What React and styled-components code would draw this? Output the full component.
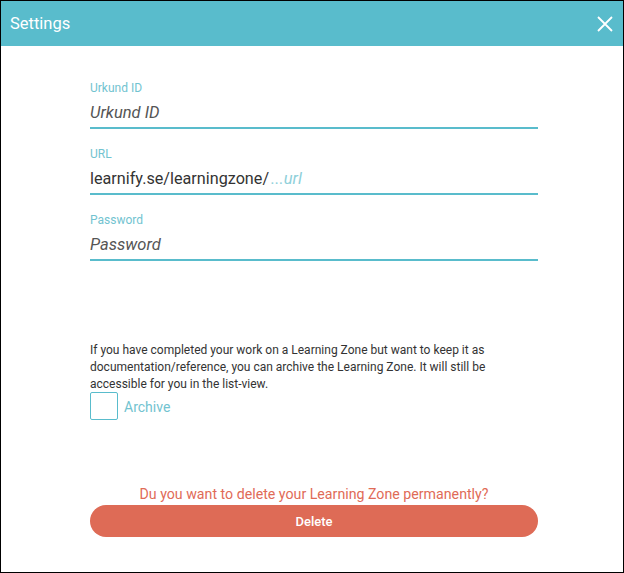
import React from 'react'
import styled, { createGlobalStyle } from 'styled-components'

const GlobalStyle = createGlobalStyle`
  html, body {
    margin: 0;
    padding: 0;
    background: #fff;
  }
  body {
    font-family: Roboto, 'Liberation Sans', sans-serif;
  }
`

const Dialog = styled.div`
  box-sizing: border-box;
  width: 624px;
  height: 573px;
  border: 1px solid #000;
  background: #fff;
  display: flex;
  flex-direction: column;
`

const Header = styled.div`
  height: 45px;
  background: #59bccc;
  display: flex;
  align-items: center;
  justify-content: space-between;
  padding: 0 10px 0 9px;
`

const Title = styled.h2`
  margin: 0;
  color: #fff;
  font-size: 16.5px;
  font-weight: 400;
`

const CloseButton = styled.button`
  background: none;
  border: none;
  padding: 0;
  width: 16px;
  height: 16px;
  display: flex;
  cursor: pointer;
  margin-top: 1px;
`

const Body = styled.div`
  padding: 35px 0 0 89px;
  width: 448px;
  display: flex;
  flex-direction: column;
`

const Field = styled.div`
  display: flex;
  flex-direction: column;
  margin-bottom: 18px;
`

const Label = styled.label`
  font-size: 12px;
  line-height: 14px;
  color: #72c3d0;
`

const InputRow = styled.div`
  display: flex;
  align-items: center;
  height: 34px;
  padding-top: 4px;
  box-sizing: border-box;
  border-bottom: 2px solid #59bccc;
`

const Prefix = styled.span`
  font-size: 16.2px;
  line-height: 20px;
  color: #333;
  margin-right: 2px;
`

const Input = styled.input`
  flex: 1;
  border: none;
  outline: none;
  padding: 0;
  background: none;
  font-family: Roboto, 'Liberation Sans', sans-serif;
  font-size: 16.5px;
  line-height: 20px;
  color: #333;

  &::placeholder {
    font-style: italic;
    color: ${(p) => (p.$light ? '#8fd0da' : '#555')};
  }
`

const Info = styled.p`
  margin: 63px 0 0;
  font-size: 12px;
  line-height: 16.8px;
  color: #333;
`

const CheckRow = styled.label`
  display: flex;
  align-items: center;
  gap: 6px;
`

const Box = styled.span`
  box-sizing: border-box;
  width: 28px;
  height: 28px;
  border: 1px solid #59bccc;
  border-radius: 2px;
  background: #fff;
`

const CheckText = styled.span`
  font-size: 14px;
  line-height: 16px;
  padding-top: 1px;
  color: #72c3d0;
`

const Question = styled.div`
  margin-top: 66px;
  text-align: center;
  font-size: 14.2px;
  line-height: 17px;
  color: #df6b57;
`

const DeleteButton = styled.button`
  margin-top: 2px;
  height: 32px;
  border: none;
  border-radius: 16px;
  background: #de6b56;
  color: #fff;
  font-family: Roboto, 'Liberation Sans', sans-serif;
  font-size: 13px;
  font-weight: 500;
  cursor: pointer;
`

const CloseIcon = () => (
  <svg width="16" height="16" viewBox="0 0 16 16">
    <path d="M1 1 L15 15 M15 1 L1 15" stroke="#fff" strokeWidth="1.8" fill="none" />
  </svg>
)

export default function App() {
  return (
    <>
      <GlobalStyle />
      <Dialog>
        <Header>
          <Title>Settings</Title>
          <CloseButton aria-label="close">
            <CloseIcon />
          </CloseButton>
        </Header>
        <Body>
          <Field>
            <Label>Urkund ID</Label>
            <InputRow>
              <Input placeholder="Urkund ID" />
            </InputRow>
          </Field>
          <Field>
            <Label>URL</Label>
            <InputRow>
              <Prefix>learnify.se/learningzone/</Prefix>
              <Input placeholder="...url" $light />
            </InputRow>
          </Field>
          <Field>
            <Label>Password</Label>
            <InputRow>
              <Input type="password" placeholder="Password" />
            </InputRow>
          </Field>
          <Info>
            If you have completed your work on a Learning Zone but want to keep it as
            documentation/reference, you can archive the Learning Zone. It will still be
            accessible for you in the list-view.
          </Info>
          <CheckRow>
            <Box />
            <CheckText>Archive</CheckText>
          </CheckRow>
          <Question>Du you want to delete your Learning Zone permanently?</Question>
          <DeleteButton>Delete</DeleteButton>
        </Body>
      </Dialog>
    </>
  )
}
